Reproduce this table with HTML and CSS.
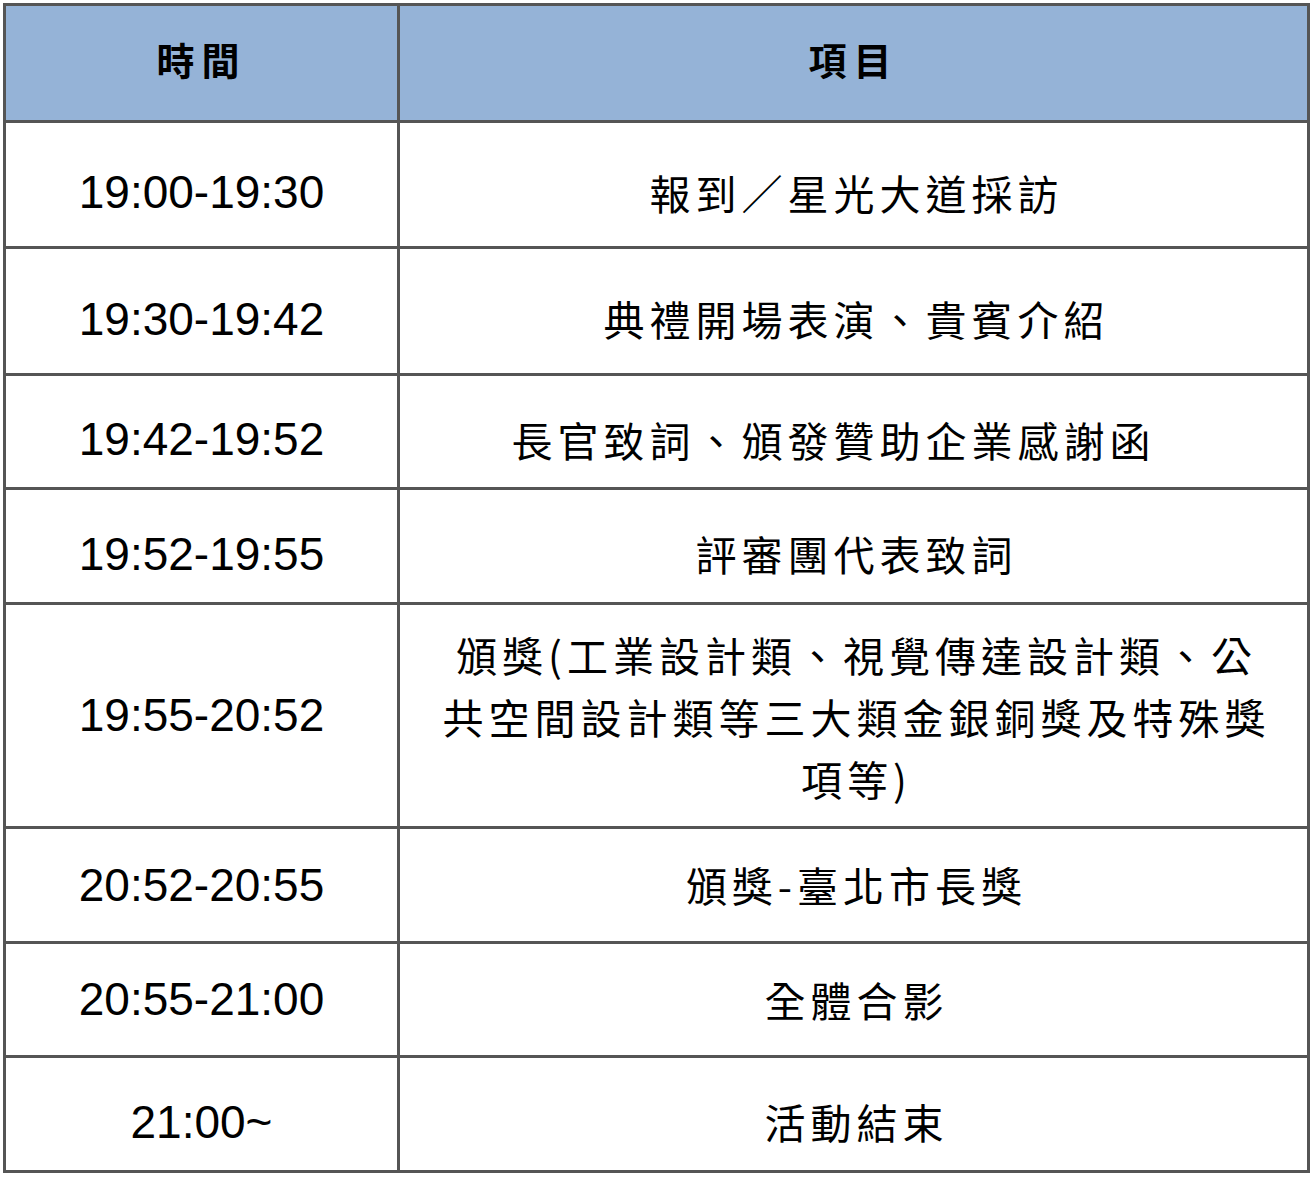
FILE: index.html
```html
<!DOCTYPE html>
<html lang="zh-Hant">
<head>
<meta charset="utf-8">
<title>流程表</title>
<link rel="stylesheet" href="styles.css">
</head>
<body>
<table class="schedule">
  <thead>
    <tr class="head-row">
      <th class="col-time">時間</th>
      <th class="col-item">項目</th>
    </tr>
  </thead>
  <tbody>
    <tr class="row-tall shift">
      <td class="time">19:00-19:30</td>
      <td class="item">報到／星光大道採訪</td>
    </tr>
    <tr class="row-tall2 shift">
      <td class="time">19:30-19:42</td>
      <td class="item">典禮開場表演、貴賓介紹</td>
    </tr>
    <tr class="row-a shift">
      <td class="time">19:42-19:52</td>
      <td class="item item-left">長官致詞、頒發贊助企業感謝函</td>
    </tr>
    <tr class="row-b shift">
      <td class="time">19:52-19:55</td>
      <td class="item">評審團代表致詞</td>
    </tr>
    <tr class="row-big">
      <td class="time">19:55-20:52</td>
      <td class="item multi">頒獎(工業設計類、視覺傳達設計類、公共空間設計類等三大類金銀銅獎及特殊獎項等)</td>
    </tr>
    <tr class="row-b">
      <td class="time">20:52-20:55</td>
      <td class="item">頒獎-臺北市長獎</td>
    </tr>
    <tr class="row-a">
      <td class="time">20:55-21:00</td>
      <td class="item">全體合影</td>
    </tr>
    <tr class="row-b shift">
      <td class="time">21:00~</td>
      <td class="item">活動結束</td>
    </tr>
  </tbody>
</table>
</body>
</html>
```
FILE: styles.css
```css
html, body {
  margin: 0;
  padding: 0;
  background: #ffffff;
}

body {
  padding: 3px;
}

.schedule {
  border-collapse: separate;
  border-spacing: 0;
  width: 1307px;
  table-layout: fixed;
  border-top: 3px solid #555555;
  border-left: 3px solid #555555;
  color: #000000;
}

.schedule th,
.schedule td {
  border-right: 3px solid #555555;
  border-bottom: 3px solid #555555;
  text-align: center;
  vertical-align: middle;
  padding: 0;
}

.schedule th.col-time {
  width: 391px;
}

.head-row {
  height: 117px;
}

.schedule .head-row th {
  background: #95b3d7;
  font-family: "Noto Sans CJK TC", "Noto Sans CJK SC", sans-serif;
  font-weight: 700;
  font-size: 38px;
  letter-spacing: 7px;
  line-height: 1.2;
  padding-bottom: 8px;
}

.time {
  font-family: "Liberation Sans", Arial, sans-serif;
  font-size: 46px;
  line-height: 1.15;
}

.item {
  font-family: "Noto Sans CJK TC", "Noto Sans CJK SC", sans-serif;
  font-weight: 400;
  font-size: 41px;
  letter-spacing: 5px;
  line-height: 1.2;
}

.schedule td.item {
  padding-left: 39px;
  padding-right: 33px;
}

.schedule td.item-left {
  padding-left: 0;
  padding-right: 40px;
}

.multi {
  line-height: 62px;
}

.row-tall { height: 126px; }
.row-tall2 { height: 127px; }
.row-a { height: 114px; }
.row-b { height: 115px; }
.row-big { height: 224px; }

.schedule .shift td {
  padding-top: 16px;
}
```
